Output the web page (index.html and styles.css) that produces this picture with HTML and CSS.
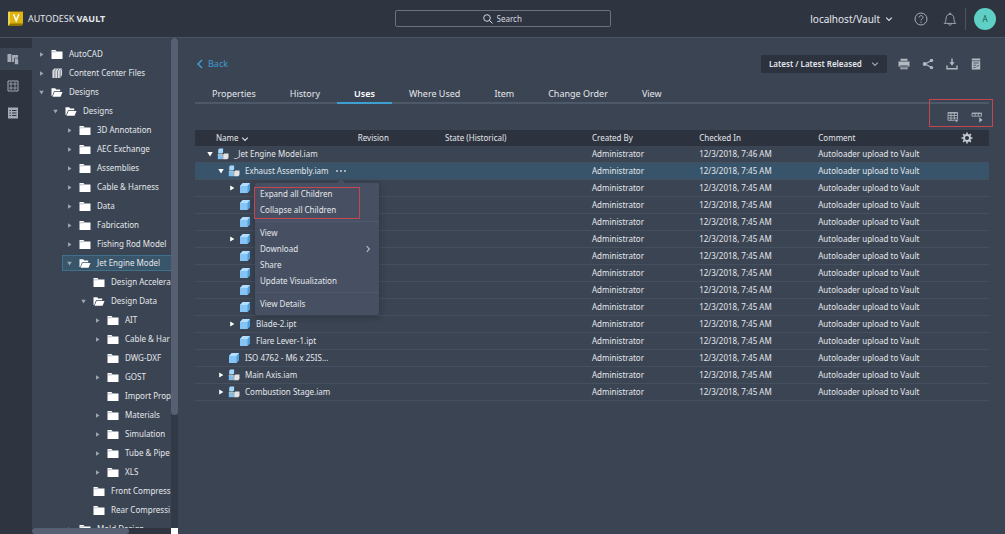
FILE: index.html
```html
<!DOCTYPE html>
<html lang="en">
<head>
<meta charset="utf-8">
<title>Autodesk Vault</title>
<link rel="stylesheet" href="styles.css">
</head>
<body>
<svg class="sprite" aria-hidden="true">
  <symbol id="folder" viewBox="0 0 12 10"><path d="M.5.5h4l1 1.5h6v7.5H.5z" fill="#fff"/><path d="M.5 2.3h4l1-.8" fill="none" stroke="#8991a0" stroke-width=".6"/></symbol>
  <symbol id="open" viewBox="0 0 12 10"><path d="M.5.7h3.7l1 1.2h4v1.8H3L1.2 8.5H.5z" fill="#fff"/><path d="M3.5 4.4h8L9.6 9.3H1.5z" fill="#fff"/></symbol>
  <symbol id="books" viewBox="0 0 12 12"><path d="M1 3 3 .5h8.500v7L9.500 11H1z" fill="#dcdde0"/><path d="M3.700 3v8M6.600 3v8M9.500 3v8M3.700 3 5.500.600M6.600 3 8.500.600M9.500 3l2-2.200" fill="none" stroke="#596170" stroke-width=".8"/></symbol>
  <symbol id="part" viewBox="0 0 12 12"><path d="M1 4 3.800 1H11v7L8.500 11H1z" fill="#86c4f5"/><path d="M1 4 3.800 1H11L8.500 4z" fill="#b3defd"/><path d="M8.500 4 11 1v7l-2.500 3z" fill="#4fa1de"/></symbol>
  <symbol id="assembly" viewBox="0 0 12 12"><path d="M1.200 1.700 2.200.600h3.900v3.800L5 5.500H1.200z" fill="#a4d7fb"/><path d="M.8 6.700h4.400v4.500H.8z" fill="#7bbdf0"/><path d="m6.200 6.600 1-1.100h4.300v4.200l-1.200 1.500H6.200z" fill="#e3e3e5"/><path d="M.8 6.600h4.400M5.700 6v5.200" stroke="#e7e9ed" stroke-width=".7"/></symbol>
  <symbol id="right" viewBox="0 0 6 6"><path d="M1.200.4 5.400 3 1.200 5.600z" fill="currentColor"/></symbol>
  <symbol id="down" viewBox="0 0 6 6"><path d="M.3 1h5.400L3 5.400z" fill="currentColor"/></symbol>
  <symbol id="chev" viewBox="0 0 8 8"><path d="m1.200 2.700 2.800 2.700 2.800-2.700" fill="none" stroke="currentColor" stroke-width="1.100"/></symbol>
</svg>

<header class="topbar">
  <div class="brand">
    <svg class="logo" viewBox="0 0 17 16"><path d="M1 1.500 2.500.500H16v13L14.500 15H1z" fill="#8f7200"/><path d="M1.200.700H16v11.800H3.600L1.200 14.500z" fill="#dcb30f"/><path d="M1.200.700h1.600v12.400l-1.600 1.400z" fill="#f6df69"/><path d="m6.600 3.200 2.600 6.500 2.600-6.500" fill="none" stroke="#fff" stroke-width="1.500"/></svg>
    <span>AUTODESK <b>VAULT</b></span>
  </div>
  <label class="search">
    <svg class="i10" viewBox="0 0 10 10"><circle cx="4" cy="4" r="3.300" fill="none" stroke="currentColor" stroke-width=".9"/><path d="m6.400 6.400 3 3" stroke="currentColor"/></svg>
    <input type="search" placeholder="Search" aria-label="Search">
  </label>
  <div class="account">
    <button class="server">localhost/Vault <svg class="i8"><use href="#chev"/></svg></button>
    <button aria-label="Help"><svg class="i14" viewBox="0 0 14 14" fill="none" stroke="currentColor"><circle cx="7" cy="7" r="6"/><path d="M5 5.500C5 3 9 3 9 5.400c0 1.500-2 1.400-2 3M7 9.700v1.200"/></svg></button>
    <button class="bell" aria-label="Notifications"><svg class="i14" viewBox="0 0 14 14" fill="none" stroke="currentColor" stroke-width=".9"><path d="M1.200 11.400c1.800-1.200 1.700-3.200 1.900-5.400C3.300 3.600 5 2.300 7 2.300s3.700 1.300 3.900 3.700c.2 2.200.1 4.200 1.900 5.400zM6 2.200c0-1.600 2-1.600 2 0M5.500 11.500c0 2.300 3 2.300 3 0"/></svg></button>
    <span class="avatar">A</span>
  </div>
</header>

<div class="app">
  <nav class="rail" aria-label="Sections">
    <button class="on" aria-label="Files"><svg class="i12" viewBox="0 0 12 12"><path d="M.5 1H4l.8 1H11v3.500H7V9H.5z" fill="currentColor"/><path d="M4.600 2v7" stroke="#3b4452" stroke-width=".7"/><path d="M7.500 5h2.300l1.700 1.700v4.800h-4z" fill="currentColor" stroke="#3b4452" stroke-width=".6"/></svg></button>
    <button aria-label="Items"><svg class="i12" viewBox="0 0 12 12" fill="none" stroke="currentColor"><path d="M1 1h10v10H1z"/><path d="M3 3h2v2H3zM7 3h2v2H7zM3 7h2v2H3zM7 7h2v2H7z" stroke-width=".8"/></svg></button>
    <button aria-label="Change orders"><svg class="i12" viewBox="0 0 12 12"><path d="M1 .5h10v11H1z" fill="currentColor"/><path d="M2.500 3.500h1.300M5 3.500h4.500M2.500 6h1.300M5 6h4.500M2.500 8.500h1.300M5 8.500h4.500" stroke="#2e3440" stroke-width="1.100"/></svg></button>
  </nav>

  <aside class="side">
    <ul class="tree">
      <li><svg class="tw"><use href="#right"/></svg><svg class="ic"><use href="#folder"/></svg>AutoCAD</li>
      <li><svg class="tw"><use href="#right"/></svg><svg class="ic"><use href="#books"/></svg>Content Center Files</li>
      <li><svg class="tw"><use href="#down"/></svg><svg class="ic"><use href="#open"/></svg>Designs</li>
      <li class="d1"><svg class="tw"><use href="#down"/></svg><svg class="ic"><use href="#open"/></svg>Designs</li>
      <li class="d2"><svg class="tw"><use href="#right"/></svg><svg class="ic"><use href="#folder"/></svg>3D Annotation</li>
      <li class="d2"><svg class="tw"><use href="#right"/></svg><svg class="ic"><use href="#folder"/></svg>AEC Exchange</li>
      <li class="d2"><svg class="tw"><use href="#right"/></svg><svg class="ic"><use href="#folder"/></svg>Assemblies</li>
      <li class="d2"><svg class="tw"><use href="#right"/></svg><svg class="ic"><use href="#folder"/></svg>Cable &amp; Harness</li>
      <li class="d2"><svg class="tw"><use href="#right"/></svg><svg class="ic"><use href="#folder"/></svg>Data</li>
      <li class="d2"><svg class="tw"><use href="#right"/></svg><svg class="ic"><use href="#folder"/></svg>Fabrication</li>
      <li class="d2"><svg class="tw"><use href="#right"/></svg><svg class="ic"><use href="#folder"/></svg>Fishing Rod Model</li>
      <li class="d2 current"><svg class="tw"><use href="#down"/></svg><svg class="ic"><use href="#open"/></svg>Jet Engine Model</li>
      <li class="d3"><svg class="tw"></svg><svg class="ic"><use href="#folder"/></svg>Design Accelera</li>
      <li class="d3"><svg class="tw"><use href="#down"/></svg><svg class="ic"><use href="#open"/></svg>Design Data</li>
      <li class="d4"><svg class="tw"><use href="#right"/></svg><svg class="ic"><use href="#folder"/></svg>AIT</li>
      <li class="d4"><svg class="tw"><use href="#right"/></svg><svg class="ic"><use href="#folder"/></svg>Cable &amp; Har</li>
      <li class="d4"><svg class="tw"></svg><svg class="ic"><use href="#folder"/></svg>DWG-DXF</li>
      <li class="d4"><svg class="tw"><use href="#right"/></svg><svg class="ic"><use href="#folder"/></svg>GOST</li>
      <li class="d4"><svg class="tw"></svg><svg class="ic"><use href="#folder"/></svg>Import Prop</li>
      <li class="d4"><svg class="tw"><use href="#right"/></svg><svg class="ic"><use href="#folder"/></svg>Materials</li>
      <li class="d4"><svg class="tw"><use href="#right"/></svg><svg class="ic"><use href="#folder"/></svg>Simulation</li>
      <li class="d4"><svg class="tw"><use href="#right"/></svg><svg class="ic"><use href="#folder"/></svg>Tube &amp; Pipe</li>
      <li class="d4"><svg class="tw"><use href="#right"/></svg><svg class="ic"><use href="#folder"/></svg>XLS</li>
      <li class="d3"><svg class="tw"></svg><svg class="ic"><use href="#folder"/></svg>Front Compress</li>
      <li class="d3"><svg class="tw"></svg><svg class="ic"><use href="#folder"/></svg>Rear Compressi</li>
      <li class="d2"><svg class="tw"><use href="#right"/></svg><svg class="ic"><use href="#folder"/></svg>Mold Design</li>
    </ul>
    <div class="vscroll"><div class="thumb"></div></div>
    <div class="hscroll"><div class="thumb"></div></div>
    <div class="corner"></div>
  </aside>

  <main class="main">
    <div class="actions">
      <a class="back" href="#"><svg class="i10" viewBox="0 0 10 10"><path d="M7 1 3 5l4 4" fill="none" stroke="currentColor" stroke-width="1.600"/></svg>Back</a>
      <span class="version">
        <select aria-label="Version"><option>Latest / Latest Released</option></select>
        <svg class="i8"><use href="#chev"/></svg>
      </span>
      <div class="tools">
        <button aria-label="Print"><svg class="i12" viewBox="0 0 12 12"><path d="M2.500.700h7v2h-7zM.5 3.400h11v5H.5zM2.500 9h7v2.300h-7z" fill="currentColor"/><path d="M2 7.800h8M3.500 9.800h5" stroke="#3b4452" stroke-width=".7"/></svg></button>
        <button aria-label="Share"><svg class="i12" viewBox="0 0 12 12"><path d="M9.500 2.500 3 6l6.500 3.600" fill="none" stroke="currentColor" stroke-width="1.100"/><circle cx="9.500" cy="2.400" r="1.700" fill="currentColor"/><circle cx="2.700" cy="6" r="1.900" fill="currentColor"/><circle cx="9.500" cy="9.600" r="1.700" fill="currentColor"/></svg></button>
        <button aria-label="Download"><svg class="i12" viewBox="0 0 12 12"><path d="M1 7.500v3.300h10V7.500M6 .5v5" fill="none" stroke="currentColor" stroke-width="1.400"/><path d="M3.400 4.300h5.200L6 7.700z" fill="currentColor"/></svg></button>
        <button aria-label="Report"><svg class="i12" viewBox="0 0 12 12"><path d="M1.800.500h8.400v11H1.800z" fill="currentColor"/><path d="M1.800 2.800h8.400M3.300 5h5.500M3.300 7.200h3M3.300 9.400h2.500M6.600 8.700l2.600-1.500" stroke="#3b4452" stroke-width=".8"/></svg></button>
      </div>
    </div>

    <nav class="tabs">
      <a href="#">Properties</a><a href="#">History</a><a href="#" class="active">Uses</a><a href="#">Where Used</a><a href="#">Item</a><a href="#">Change Order</a><a href="#">View</a>
    </nav>

    <div class="gridtools">
      <button aria-label="Export table"><svg class="i12" viewBox="0 0 12 12" fill="none" stroke="currentColor" stroke-width=".8"><path d="M1 1.500h9.500v7.800H1zM1 2.200h9.500M1 4.500h9.500M1 7h9.500M4 1.500v7.800M7.300 1.500v7.800"/><path d="M7.300 8.600h4.500L9.500 11.500z" fill="currentColor" stroke="#3b4452" stroke-width=".5"/></svg></button>
      <button aria-label="Expand rows"><svg class="i12" viewBox="0 0 12 12" fill="none" stroke="currentColor" stroke-width=".8"><path d="M1 2h9.500v3.200H1zM1 2.600h9.500M4.100 2v3M7.300 2v3"/><path d="M8.300 6.200 11.500 9l-3.200 2.600z" fill="currentColor" stroke="none"/></svg></button>
      <div class="mark"></div>
    </div>

    <table class="uses">
      <colgroup><col class="c1"><col class="c2"><col class="c3"><col class="c4"><col class="c5"><col></colgroup>
      <thead><tr><th>Name <svg class="i8"><use href="#chev"/></svg></th><th>Revision</th><th>State (Historical)</th><th>Created By</th><th>Checked In</th><th><div class="last">Comment<button aria-label="Column settings"><svg class="i12" viewBox="0 0 12 12"><circle cx="6" cy="6" r="3" fill="none" stroke="currentColor" stroke-width="1.900"/><path d="M6 .500v2M6 9.500v2M.5 6h2M9.500 6h2M2.100 2.100l1.500 1.500M8.400 8.400l1.500 1.500M2.100 9.900l1.500-1.500M8.400 3.600l1.500-1.500" stroke="currentColor" stroke-width="1.600"/></svg></button></div></th></tr></thead>
      <tbody>
        <tr><td><div class="name"><svg class="tw"><use href="#down"/></svg><svg class="ic"><use href="#assembly"/></svg>_Jet Engine Model.iam</div></td><td></td><td></td><td>Administrator</td><td>12/3/2018, 7:46 AM</td><td>Autoloader upload to Vault</td></tr>
        <tr class="picked"><td><div class="name n1"><svg class="tw"><use href="#down"/></svg><svg class="ic"><use href="#assembly"/></svg>Exhaust Assembly.iam<button class="more" aria-label="More"><svg viewBox="0 0 12 4"><circle cx="2" cy="2" r=".9"/><circle cx="6" cy="2" r=".9"/><circle cx="10" cy="2" r=".9"/></svg></button>
          <div class="menu" role="menu">
            <button role="menuitem">Expand all Children</button>
            <button role="menuitem">Collapse all Children</button>
            <hr>
            <button role="menuitem">View</button>
            <button role="menuitem">Download<svg class="i8 side-chev"><use href="#chev"/></svg></button>
            <button role="menuitem">Share</button>
            <button role="menuitem">Update Visualization</button>
            <hr>
            <button role="menuitem">View Details</button>
            <div class="mark"></div>
          </div></div></td><td></td><td></td><td>Administrator</td><td>12/3/2018, 7:45 AM</td><td>Autoloader upload to Vault</td></tr>
        <tr><td><div class="name n2"><svg class="tw"><use href="#right"/></svg><svg class="ic"><use href="#part"/></svg></div></td><td></td><td></td><td>Administrator</td><td>12/3/2018, 7:45 AM</td><td>Autoloader upload to Vault</td></tr>
        <tr><td><div class="name n2"><svg class="tw"></svg><svg class="ic"><use href="#part"/></svg></div></td><td></td><td></td><td>Administrator</td><td>12/3/2018, 7:45 AM</td><td>Autoloader upload to Vault</td></tr>
        <tr><td><div class="name n2"><svg class="tw"></svg><svg class="ic"><use href="#part"/></svg></div></td><td></td><td></td><td>Administrator</td><td>12/3/2018, 7:45 AM</td><td>Autoloader upload to Vault</td></tr>
        <tr><td><div class="name n2"><svg class="tw"><use href="#right"/></svg><svg class="ic"><use href="#part"/></svg></div></td><td></td><td></td><td>Administrator</td><td>12/3/2018, 7:45 AM</td><td>Autoloader upload to Vault</td></tr>
        <tr><td><div class="name n2"><svg class="tw"></svg><svg class="ic"><use href="#part"/></svg></div></td><td></td><td></td><td>Administrator</td><td>12/3/2018, 7:45 AM</td><td>Autoloader upload to Vault</td></tr>
        <tr><td><div class="name n2"><svg class="tw"></svg><svg class="ic"><use href="#part"/></svg></div></td><td></td><td></td><td>Administrator</td><td>12/3/2018, 7:45 AM</td><td>Autoloader upload to Vault</td></tr>
        <tr><td><div class="name n2"><svg class="tw"></svg><svg class="ic"><use href="#part"/></svg></div></td><td></td><td></td><td>Administrator</td><td>12/3/2018, 7:45 AM</td><td>Autoloader upload to Vault</td></tr>
        <tr><td><div class="name n2"><svg class="tw"></svg><svg class="ic"><use href="#part"/></svg></div></td><td></td><td></td><td>Administrator</td><td>12/3/2018, 7:45 AM</td><td>Autoloader upload to Vault</td></tr>
        <tr><td><div class="name n2"><svg class="tw"><use href="#right"/></svg><svg class="ic"><use href="#part"/></svg>Blade-2.ipt</div></td><td></td><td></td><td>Administrator</td><td>12/3/2018, 7:45 AM</td><td>Autoloader upload to Vault</td></tr>
        <tr><td><div class="name n2"><svg class="tw"></svg><svg class="ic"><use href="#part"/></svg>Flare Lever-1.ipt</div></td><td></td><td></td><td>Administrator</td><td>12/3/2018, 7:45 AM</td><td>Autoloader upload to Vault</td></tr>
        <tr><td><div class="name n1"><svg class="tw"></svg><svg class="ic"><use href="#part"/></svg>ISO 4762 - M6 x 25IS...</div></td><td></td><td></td><td>Administrator</td><td>12/3/2018, 7:45 AM</td><td>Autoloader upload to Vault</td></tr>
        <tr><td><div class="name n1"><svg class="tw"><use href="#right"/></svg><svg class="ic"><use href="#assembly"/></svg>Main Axis.iam</div></td><td></td><td></td><td>Administrator</td><td>12/3/2018, 7:45 AM</td><td>Autoloader upload to Vault</td></tr>
        <tr><td><div class="name n1"><svg class="tw"><use href="#right"/></svg><svg class="ic"><use href="#assembly"/></svg>Combustion Stage.iam</div></td><td></td><td></td><td>Administrator</td><td>12/3/2018, 7:45 AM</td><td>Autoloader upload to Vault</td></tr>
      </tbody>
    </table>
  </main>
</div>
</body>
</html>
```

FILE: styles.css
```css
* { box-sizing: border-box; }
body {
  margin: 0;
  height: 100vh;
  display: flex;
  flex-direction: column;
  overflow: hidden;
  background: #3b4452;
  color: #e4e7ec;
  font: 8px/16px "Noto Sans", sans-serif;
}
button, input, select { font: inherit; color: inherit; background: none; border: 0; padding: 0; margin: 0; }
button { display: flex; align-items: center; }
a { color: inherit; text-decoration: none; }
svg { display: block; flex: none; }
.sprite { position: absolute; width: 0; height: 0; }
.i8 { width: 8px; height: 8px; }
.i10 { width: 10px; height: 10px; }
.i12 { width: 12px; height: 12px; }
.i14 { width: 14px; height: 14px; }

.topbar {
  flex: none;
  display: grid;
  grid-template-columns: 1fr 216px 1fr;
  align-items: center;
  height: 38px;
  background: #2e3440;
  border-bottom: 1px solid #4b5463;
}
.brand { display: flex; align-items: center; gap: 4px; padding-left: 7px; font-size: 9px; }
.logo { width: 17px; height: 16px; }
.search { display: flex; align-items: center; gap: 4px; height: 17px; padding-left: 87px; border: 1px solid #6a7280; border-radius: 2px; }
.search input { flex: 1; min-width: 0; outline: 0; }
.search input::placeholder { color: #d5d9e0; opacity: 1; }
.account { display: flex; align-items: center; justify-content: flex-end; padding-right: 9px; color: #a8aeb9; }
.server { gap: 5px; margin-right: 21px; color: #e4e7ec; font-size: 10px; }
.bell { margin: 0 8px 0 15px; }
.avatar { width: 31px; height: 22px; padding-left: 8px; border-left: 1px solid #4b5463; position: relative; text-align: center; line-height: 22px; color: #22564f; z-index: 0; }
.avatar::before { content: ""; position: absolute; z-index: -1; right: 0; top: 0; width: 22px; height: 22px; border-radius: 50%; background: #5fd0c5; }

.app { flex: 1; min-height: 0; display: grid; grid-template-columns: 32px 146px 1fr; }
.rail { background: #2e3440; padding-top: 10px; color: #a5abb6; }
.rail button { width: 100%; height: 22px; margin-bottom: 5px; padding-left: 7px; }
.rail .on { background: #3b4452; }

.side { display: grid; grid-template-columns: 1fr 7px; grid-template-rows: 1fr 6px; min-height: 0; }
.tree { list-style: none; margin: 0; padding: 8px 0 0 2px; overflow: hidden; white-space: nowrap; min-height: 0; }
.tree li { display: flex; align-items: center; height: 16px; margin-bottom: 3px; padding-left: 4px; border: 1px solid transparent; }
.tree .tw { width: 5px; height: 5px; margin-right: 7px; color: #9da5b1; }
.tree .ic { width: 12px; height: 11px; margin-right: 6px; }
.tree .d1 { margin-left: 14px; }
.tree .d2 { margin-left: 28px; }
.tree .d3 { margin-left: 42px; }
.tree .d4 { margin-left: 56px; }
.tree .current { background: #38556a; border-color: #3f708c; border-right: 0; }
.vscroll { background: #333a47; }
.vscroll .thumb { height: 77%; border-radius: 4px; background: #566072; }
.hscroll { background: #2e3440; }
.hscroll .thumb { width: 70%; height: 6px; border-radius: 3px; background: #566072; }
.corner { background: #fff; }

.main { min-width: 0; padding: 17px 16px 0 17px; }
.actions { display: flex; align-items: center; height: 18px; }
.back { display: flex; align-items: center; gap: 3px; margin-right: auto; color: #3e9bd0; font-size: 9px; }
.version { position: relative; width: 126px; height: 18px; margin-right: 11px; background: #2c323e; }
.version select { appearance: none; width: 100%; height: 100%; padding-left: 8px; font-weight: 600; }
.version svg { position: absolute; right: 8px; top: 5px; pointer-events: none; color: #aab0bb; }
.tools { display: flex; gap: 12px; padding-right: 7px; color: #b4bac4; }
.tabs { display: flex; height: 20px; margin-top: 11px; border-bottom: 2px solid #4d5868; font-size: 9px; line-height: 20px; }
.tabs a { padding: 0 17px; height: 20px; }
.tabs .active { font-weight: 600; color: #fff; border-bottom: 2px solid #3f9fd0; }
.gridtools { position: relative; display: flex; align-items: center; justify-content: flex-end; gap: 12px; height: 26px; padding-right: 6px; color: #b4bac4; }
.mark { position: absolute; border: 1px solid #c54550; pointer-events: none; }
.gridtools .mark { right: -4px; top: -5px; width: 64px; height: 28px; }

.uses { width: 100%; table-layout: fixed; border-collapse: separate; border-spacing: 0; }
.c1 { width: 20.5%; }
.c2 { width: 11%; }
.c3 { width: 18.5%; }
.c4 { width: 13.5%; }
.c5 { width: 15%; }
.uses th { height: 16px; padding: 0; background: #2c323e; font-weight: 400; text-align: left; line-height: 16px; }
.uses th:first-child { padding-left: 21px; }
.uses th .i8 { display: inline-block; vertical-align: middle; }
.last { display: flex; justify-content: space-between; padding-right: 16px; }
.last button { color: #c6cbd4; }
.uses td { height: 17px; padding: 0; border-bottom: 1px solid #454f5e; line-height: 16px; white-space: nowrap; }
.picked { background: #38546a; }
.name { position: relative; display: flex; align-items: center; height: 16px; padding-left: 12px; }
.n1 { padding-left: 23px; }
.n2 { padding-left: 34px; }
.name .tw { width: 6px; height: 6px; margin-right: 4px; color: #fff; }
.name .ic { width: 12px; height: 12px; margin-right: 5px; }
.more { margin-left: 5px; }
.more svg { width: 14px; height: 4px; fill: #d5d9e0; }
.menu { position: absolute; z-index: 2; left: 60px; top: 20px; width: 124px; padding: 3px 0; border-radius: 2px; background: #475062; box-shadow: 0 2px 6px rgba(20, 25, 34, .4); }
.menu::before { content: ""; position: absolute; left: 82px; top: -4px; border: 4px solid transparent; border-top: 0; border-bottom-color: #475062; }
.menu button { width: 100%; height: 16px; padding: 0 7px 0 5px; }
.menu hr { margin: 3px 0; border: 0; border-top: 1px solid #505a6b; }
.side-chev { margin-left: auto; transform: rotate(-90deg); color: #b4bac4; }
.menu .mark { left: -1px; top: 4px; width: 106px; height: 32px; }
```
